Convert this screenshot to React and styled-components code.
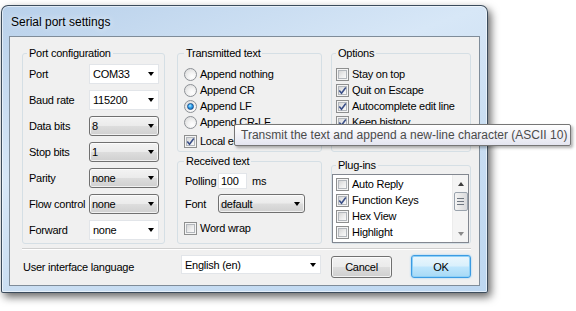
import React from 'react';
import styled, { createGlobalStyle } from 'styled-components';

const Global = createGlobalStyle`
  html, body { margin: 0; padding: 0; background: #fff; }
  body {
    font-family: "Liberation Sans", Arial, sans-serif;
    font-size: 11px;
    letter-spacing: -0.25px;
    color: #000;
  }
  *, *::before, *::after { box-sizing: border-box; }
`;

const Page = styled.div`
  position: relative;
  width: 576px;
  height: 311px;
  padding: 5px 0 0 1px;
  overflow: hidden;
`;

const Window = styled.div`
  width: 487px;
  height: 288px;
  border: 1px solid rgba(35, 50, 66, 0.85);
  border-radius: 7px 7px 2px 2px;
  background: linear-gradient(160deg, #b8d0ea 0%, #d7e7f7 38%, #cadef2 62%, #bdd7f1 100%);
  box-shadow: 3px 4px 8px rgba(0, 0, 0, 0.6), inset 0 0 0 1px rgba(255, 255, 255, 0.55);
  padding: 0 7px 6px 7px;
  display: flex;
  flex-direction: column;
`;

const TitleBar = styled.div`
  height: 30px;
  display: flex;
  align-items: center;
  padding: 2px 0 0 2px;
`;

const Title = styled.span`
  font-size: 12px;
  letter-spacing: 0;
  text-shadow: 0 0 6px rgba(255, 255, 255, 0.9);
`;

const Client = styled.div`
  flex: 1;
  border: 1px solid #7f8c99;
  background: #f0f0f0;
  padding: 9px 8px 7px 12px;
  display: flex;
  flex-direction: column;
`;

const Columns = styled.div`
  display: flex;
  align-items: flex-start;
`;

const Column = styled.div`
  width: ${p => p.$w}px;
  margin-left: ${p => p.$ml || 0}px;
  display: flex;
  flex-direction: column;
  gap: ${p => p.$gap || 0}px;
`;

const Group = styled.fieldset`
  margin: 0;
  min-width: 0;
  height: ${p => p.$h}px;
  padding: ${p => p.$pad};
  border: 1px solid #d5dfe5;
  border-radius: 3px;
`;

const Legend = styled.legend`
  padding: 0 2px;
  margin-left: ${p => p.$ml || 0}px;
  line-height: 14px;
`;

const FieldGrid = styled.div`
  display: grid;
  grid-template-columns: 61px 70px;
  grid-auto-rows: 20px;
  row-gap: 6px;
  align-items: center;
`;

const Label = styled.span`
  width: ${p => (p.$w ? `${p.$w}px` : 'auto')};
  flex-shrink: 0;
  padding-left: 1px;
  white-space: nowrap;
`;

const Combo = styled.div`
  display: flex;
  align-items: center;
  width: ${p => p.$w}px;
  height: ${p => p.$h || 20}px;
  padding-left: ${p => (p.$list ? 2 : 3)}px;
  border: 1px solid ${p => (p.$list ? '#707070' : '#e2e5e9')};
  border-radius: ${p => (p.$list ? 3 : 0)}px;
  background: ${p =>
    p.$list
      ? 'linear-gradient(#f3f3f3 0%, #ebebeb 48%, #dddddd 52%, #d0d0d0 100%)'
      : '#fff'};
  box-shadow: ${p => (p.$list ? 'inset 0 0 0 1px rgba(255,255,255,0.7)' : 'none')};
`;

const Arrow = styled.span`
  margin-left: ${p => (p.$center ? 0 : 'auto')};
  margin-right: ${p => (p.$center ? 0 : 4)}px;
  width: 0;
  height: 0;
  border-left: 3.5px solid transparent;
  border-right: 3.5px solid transparent;
  border-top: 4px solid ${p => p.$c || '#000'};
`;

const UpArrow = styled.span`
  width: 0;
  height: 0;
  border-left: 3.5px solid transparent;
  border-right: 3.5px solid transparent;
  border-bottom: 4px solid ${p => p.$c || '#000'};
`;

const OptionList = styled.div`
  display: flex;
  flex-direction: column;
`;

const OptionRow = styled.label`
  display: flex;
  align-items: center;
  gap: 3px;
  height: 16px;
  margin-top: ${p => p.$mt || 0}px;
  white-space: nowrap;
`;

const Radio = styled.span`
  position: relative;
  width: 13px;
  height: 13px;
  flex-shrink: 0;
  border-radius: 50%;
  border: 1px solid #8d9196;
  background: radial-gradient(circle at 65% 70%, #ffffff 0%, #f4f4f4 35%, #d6d6d6 100%);
  &::after {
    content: '';
    display: ${p => (p.$checked ? 'block' : 'none')};
    position: absolute;
    left: 2px;
    top: 2px;
    width: 7px;
    height: 7px;
    border-radius: 50%;
    border: 1px solid #1a4f8e;
    background: radial-gradient(circle at 40% 35%, #b9ecff 0%, #35a6f0 40%, #0b5ea8 100%);
  }
`;

const Box = styled.span`
  display: flex;
  align-items: center;
  justify-content: center;
  width: 13px;
  height: 13px;
  flex-shrink: 0;
  border: 1px solid #8e8f8f;
  background: #f4f4f4;
  & > span {
    width: 9px;
    height: 9px;
    border: 1px solid #b3b7bc;
    background: linear-gradient(135deg, #d6d6d6 0%, #ececec 55%, #fafafa 100%);
    position: relative;
  }
  & svg {
    position: absolute;
    left: -2px;
    top: -2px;
  }
`;

const Check = ({ checked }) => (
  <Box>
    <span>
      {checked && (
        <svg width="11" height="11" viewBox="0 0 11 11">
          <path d="M2.3 5.6 L4.5 8.2 L8.8 2.4" fill="none" stroke="#3a4f88" strokeWidth="1.6" />
        </svg>
      )}
    </span>
  </Box>
);

const Row = styled.div`
  display: flex;
  align-items: center;
  height: ${p => p.$h}px;
  margin-top: ${p => p.$mt || 0}px;
`;

const EditBox = styled.div`
  width: ${p => p.$w}px;
  height: ${p => p.$h}px;
  border: 1px solid #e2e5e9;
  background: #fff;
  padding-left: 2px;
  display: flex;
  align-items: center;
`;

const Unit = styled.span`
  margin-left: 5px;
`;

const ListBox = styled.div`
  display: flex;
  height: 69px;
  margin-top: 2px;
  border: 1px solid #828790;
  background: #fff;
  overflow: hidden;
`;

const Items = styled.div`
  flex: 1;
  padding: 1px 0 0 3px;
`;

const ScrollBar = styled.div`
  width: 16px;
  display: flex;
  flex-direction: column;
  align-items: center;
  background: #f4f4f4;
  border-left: 1px solid #ececec;
`;

const ScrollButton = styled.div`
  height: 17px;
  width: 100%;
  display: flex;
  align-items: center;
  justify-content: center;
`;

const Thumb = styled.div`
  width: 14px;
  height: 19px;
  border: 1px solid #9aa3ad;
  border-radius: 2px;
  background: linear-gradient(90deg, #f4f4f4, #e6e6e6 50%, #d9dadd);
  display: flex;
  flex-direction: column;
  align-items: center;
  justify-content: center;
  gap: 2px;
  & > i {
    display: block;
    width: 7px;
    height: 1px;
    background: #6e7680;
  }
`;

const Track = styled.div`
  flex: 1;
`;

const Separator = styled.div`
  margin-top: 4px;
  height: 2px;
  border-top: 1px solid #cfcfcf;
  border-bottom: 1px solid #fff;
`;

const BottomRow = styled.div`
  margin-top: 5px;
  height: 23px;
  display: grid;
  grid-template-columns: 155px 154px 140px;
  align-items: center;
`;

const ComboCell = styled.div`
  align-self: start;
  padding-left: 4px;
`;

const Buttons = styled.div`
  display: flex;
  justify-content: space-between;
  height: 23px;
`;

const Button = styled.button`
  font: inherit;
  letter-spacing: inherit;
  color: #000;
  width: ${p => p.$w}px;
  height: ${p => p.$h}px;
  margin-top: ${p => p.$mt || 0}px;
  padding: 0;
  border-radius: 3px;
  border: 1px solid ${p => (p.$default ? '#3c9be2' : '#707070')};
  background: ${p =>
    p.$default
      ? 'linear-gradient(#eaf6fd 0%, #d9f0fc 48%, #bee6fd 52%, #a7d9f5 100%)'
      : 'linear-gradient(#f2f2f2 0%, #ebebeb 48%, #dddddd 52%, #cfcfcf 100%)'};
  box-shadow: ${p =>
    p.$default
      ? 'inset 0 0 0 1px #8ed0f7, 0 0 2px #7cc6f5'
      : 'inset 0 0 0 1px rgba(255,255,255,0.75)'};
`;

const Tooltip = styled.div`
  position: absolute;
  left: 234px;
  top: 124px;
  width: 337px;
  height: 22px;
  display: flex;
  align-items: center;
  padding-left: 6px;
  font-size: 12px;
  letter-spacing: 0;
  color: #4b4b4b;
  white-space: nowrap;
  border: 1px solid #767676;
  border-radius: 2px;
  background: linear-gradient(#ffffff, #e4e5f0);
  box-shadow: 2px 2px 3px rgba(0, 0, 0, 0.3);
`;

const portRows = [
  ['Port', 'COM33', false],
  ['Baud rate', '115200', false],
  ['Data bits', '8', true],
  ['Stop bits', '1', true],
  ['Parity', 'none', true],
  ['Flow control', 'none', true],
  ['Forward', 'none', false],
];

const radios = [
  ['Append nothing', false],
  ['Append CR', false],
  ['Append LF', true],
  ['Append CR-LF', false],
];

const options = [
  ['Stay on top', false],
  ['Quit on Escape', true],
  ['Autocomplete edit line', true],
  ['Keep history', true],
];

const plugins = [
  ['Auto Reply', false],
  ['Function Keys', true],
  ['Hex View', false],
  ['Highlight', false],
  ['', false],
];

export default function App() {
  return (
    <Page>
      <Global />
      <Window>
        <TitleBar>
          <Title>Serial port settings</Title>
        </TitleBar>
        <Client>
          <Columns>
            <Column $w={143}>
              <Group $h={198} $pad="4px 5px 0 5px">
                <Legend $ml={-1}>Port configuration</Legend>
                <FieldGrid>
                  {portRows.map(([label, value, list]) => (
                    <React.Fragment key={label}>
                      <Label>{label}</Label>
                      <Combo $w={70} $list={list}>
                        {value}
                        <Arrow />
                      </Combo>
                    </React.Fragment>
                  ))}
                </FieldGrid>
              </Group>
            </Column>

            <Column $w={145} $ml={12} $gap={2}>
              <Group $h={106} $pad="6px 5px 0 6px">
                <Legend>Transmitted text</Legend>
                <OptionList>
                  {radios.map(([label, checked]) => (
                    <OptionRow key={label}>
                      <Radio $checked={checked} />
                      {label}
                    </OptionRow>
                  ))}
                  <OptionRow $mt={3}>
                    <Check checked />
                    Local echo
                  </OptionRow>
                </OptionList>
              </Group>
              <Group $h={90} $pad="5px 5px 0 6px">
                <Legend>Received text</Legend>
                <Row $h={16}>
                  <Label $w={34}>Polling</Label>
                  <EditBox $w={29} $h={16}>100</EditBox>
                  <Unit>ms</Unit>
                </Row>
                <Row $h={19} $mt={5}>
                  <Label $w={34}>Font</Label>
                  <Combo $w={87} $h={19} $list>
                    default
                    <Arrow />
                  </Combo>
                </Row>
                <OptionRow $mt={7}>
                  <Check />
                  Word wrap
                </OptionRow>
              </Group>
            </Column>

            <Column $w={140} $ml={9} $gap={6}>
              <Group $h={106} $pad="6px 4px 0 4px">
                <Legend>Options</Legend>
                <OptionList>
                  {options.map(([label, checked]) => (
                    <OptionRow key={label}>
                      <Check checked={checked} />
                      {label}
                    </OptionRow>
                  ))}
                </OptionList>
              </Group>
              <Group $h={86} $pad="0 1px 0 0">
                <Legend $ml={4}>Plug-ins</Legend>
                <ListBox>
                  <Items>
                    {plugins.map(([label, checked], i) => (
                      <OptionRow key={i}>
                        <Check checked={checked} />
                        {label}
                      </OptionRow>
                    ))}
                  </Items>
                  <ScrollBar>
                    <ScrollButton>
                      <UpArrow $c="#3c3c3c" />
                    </ScrollButton>
                    <Thumb>
                      <i />
                      <i />
                      <i />
                    </Thumb>
                    <Track />
                    <ScrollButton>
                      <Arrow $c="#8a8a8a" $center />
                    </ScrollButton>
                  </ScrollBar>
                </ListBox>
              </Group>
            </Column>
          </Columns>

          <Separator />

          <BottomRow>
            <Label>User interface language</Label>
            <ComboCell>
              <Combo $w={140} $h={19}>
                English (en)
                <Arrow />
              </Combo>
            </ComboCell>
            <Buttons>
              <Button $w={61} $h={22} $mt={1}>Cancel</Button>
              <Button $w={60} $h={23} $default>OK</Button>
            </Buttons>
          </BottomRow>
        </Client>
      </Window>
      <Tooltip>Transmit the text and append a new-line character (ASCII 10)</Tooltip>
    </Page>
  );
}
